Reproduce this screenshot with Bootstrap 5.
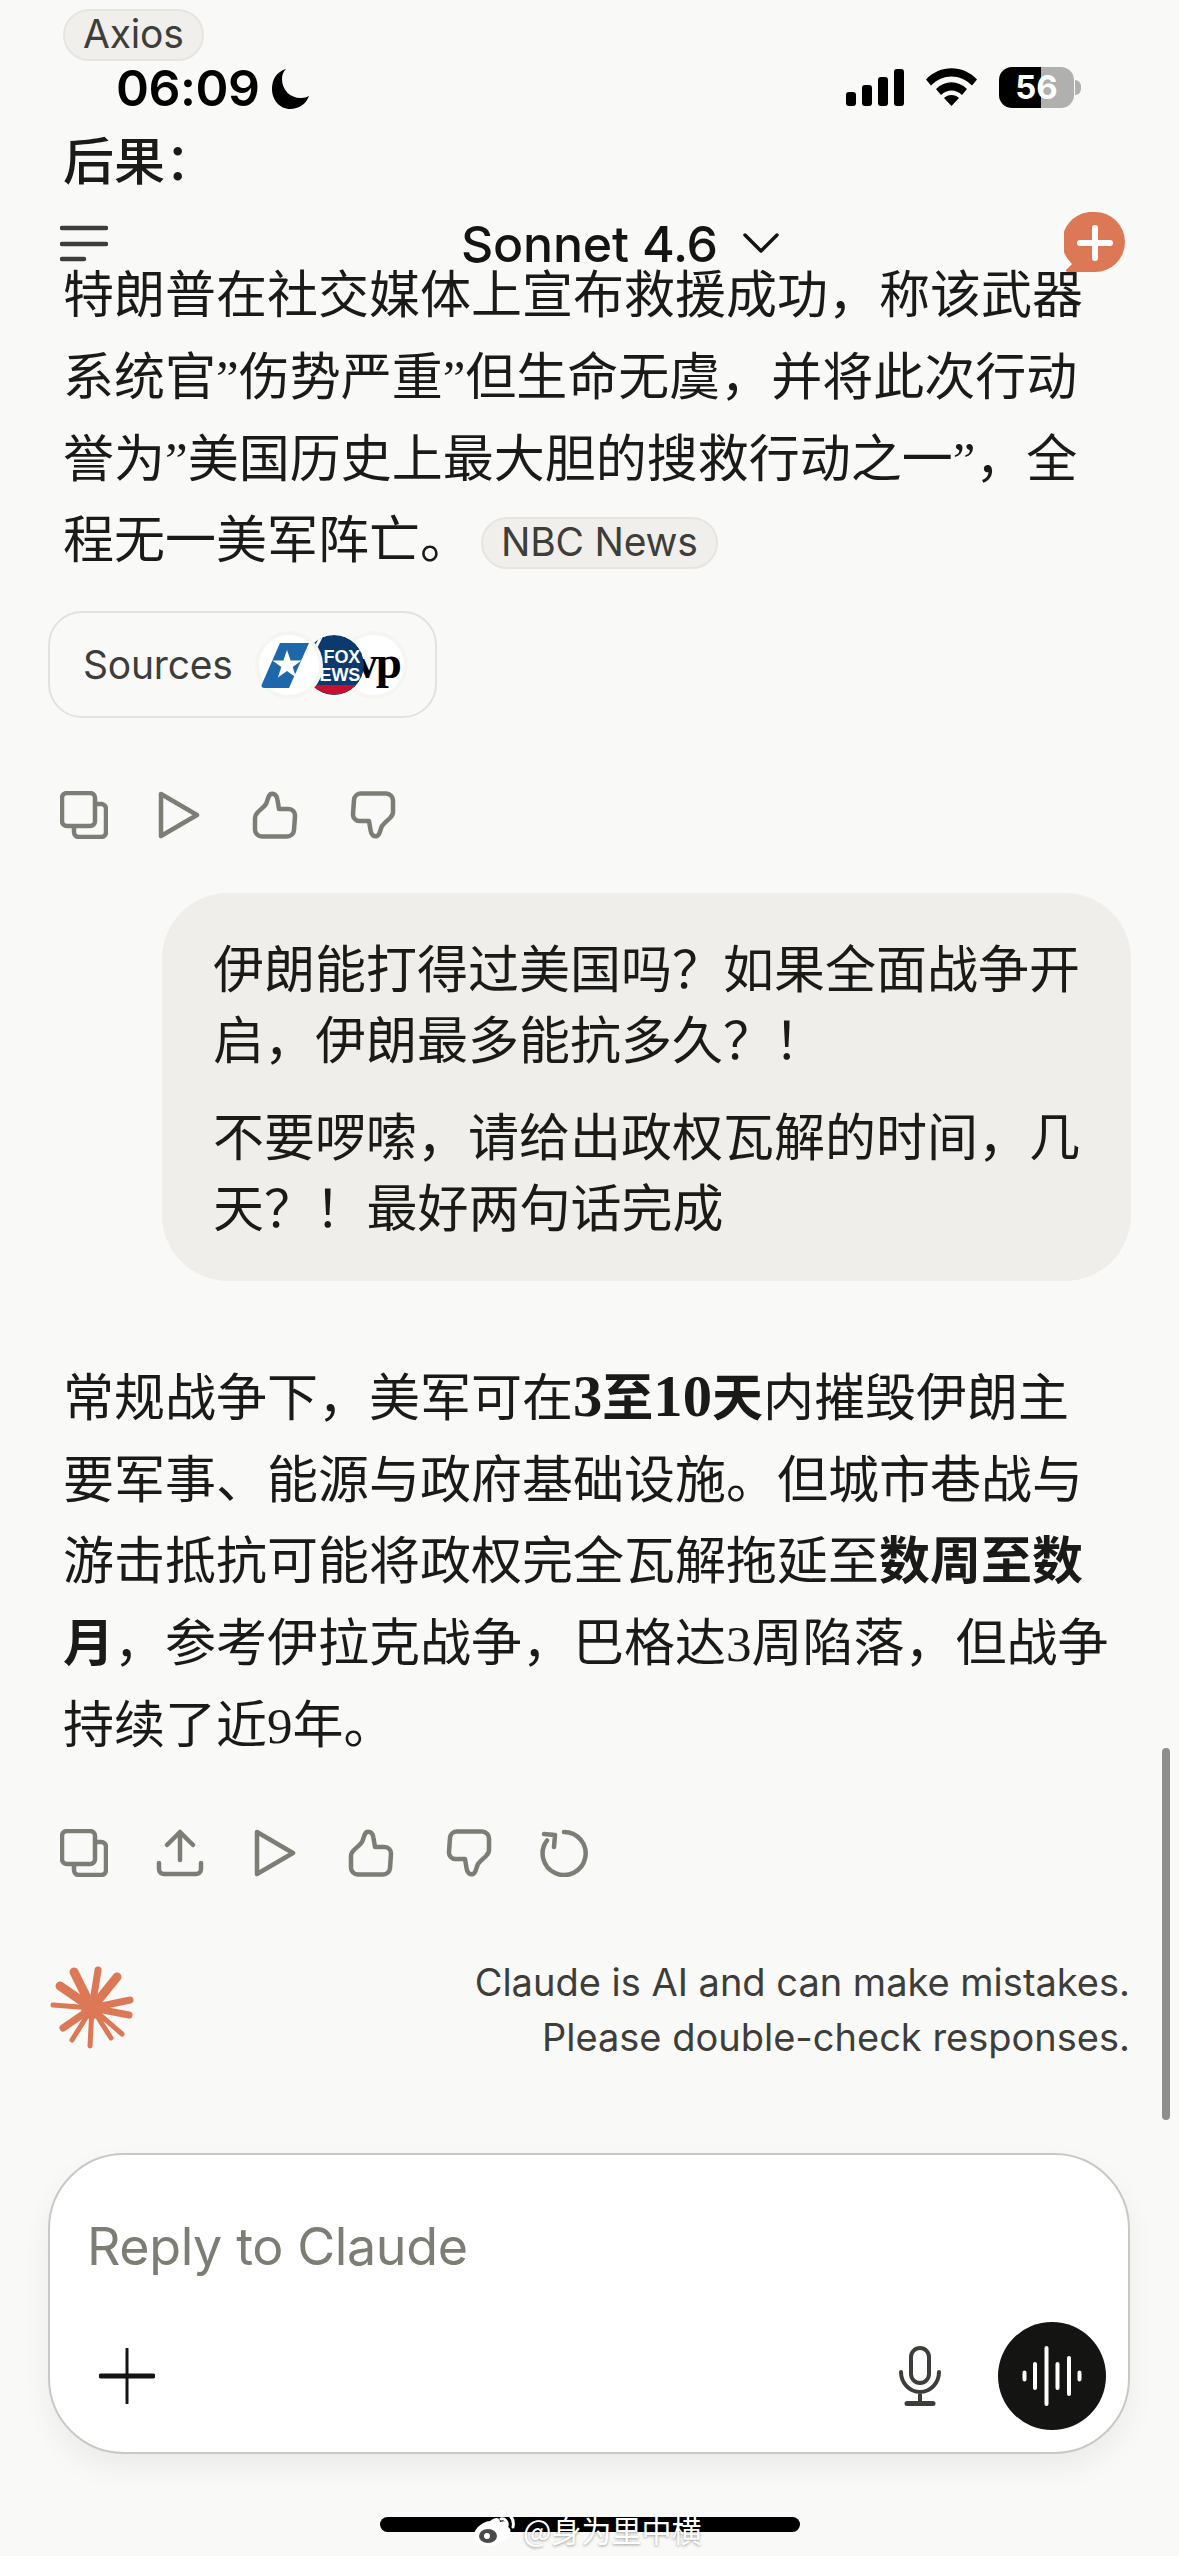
<!DOCTYPE html>
<html lang="en">
<head>
    <meta charset="UTF-8">
    <meta name="viewport" content="width=device-width, initial-scale=1.0">
    <title>Claude</title>
    <link href="https://cdn.jsdelivr.net/npm/bootstrap@5.3.0/dist/css/bootstrap.min.css" rel="stylesheet">
    <style>
        body {
            background: #f9f9f7;
            height: 2556px;
            overflow: hidden;
            font-family: "Noto Sans CJK SC", sans-serif;
            color: #1a1a18;
        }
        .phone {
            height: 2556px;
            overflow: hidden;
        }
        /* overlays */
        .status-bar {
            top: 0;
            left: 0;
            width: 1179px;
            height: 120px;
        }
        .clock {
            left: 116px;
            top: 58px;
            font: 600 50px/60px Inter, sans-serif;
            letter-spacing: -0.5px;
            color: #000;
        }
        .moon { left: 270px; top: 68px; }
        .signal { left: 846px; top: 69px; }
        .wifi { left: 926px; top: 68px; }
        .battery {
            left: 999px;
            top: 67px;
            width: 75px;
            height: 41px;
            border-radius: 13px;
            overflow: hidden;
            background: linear-gradient(90deg, #000 0, #000 42px, #b0b0ae 42px);
            color: #fff;
            font: 700 33px/41px Inter, sans-serif;
            text-align: center;
        }
        .battery-nub {
            left: 1075px;
            top: 80px;
            width: 6px;
            height: 15px;
            border-radius: 0 8px 8px 0;
            background: #b0b0ae;
        }
        .menu-bars { left: 60px; top: 225px; }
        .model-name {
            left: 461px;
            top: 214px;
            font: 500 50px/60px Inter, sans-serif;
            color: #141413;
            letter-spacing: -0.2px;
        }
        .model-chevron { left: 743px; top: 232px; }
        .new-chat { left: 1064px; top: 212px; }
        .scroll-thumb {
            left: 1162px;
            top: 1748px;
            width: 8px;
            height: 372px;
            border-radius: 4px;
            background: #8e8e8c;
        }
        .home-bar {
            left: 380px;
            top: 2517px;
            width: 420px;
            height: 15px;
            border-radius: 8px;
            background: #000;
        }
        .watermark {
            left: 473px;
            top: 2507px;
            gap: 6px;
            color: #fff;
            font-size: 30px;
            line-height: 44px;
            text-shadow: 0 1px 3px rgba(0, 0, 0, .4);
        }
        /* thread */
        .answer {
            margin: 0;
            padding: 0 64px 0 63px;
            font-size: 51px;
            line-height: 81.67px;
            font-family: "Liberation Serif", "Noto Sans CJK SC", serif;
        }
        .answer b { font-weight: 700; }
        .fig { font-size: 1.15em; line-height: 1; }
        .first-chunk { margin-top: -7px; }
        .heading-chunk { margin-top: 48px; font-weight: 500; }
        .body-chunk { margin-top: 52px; }
        .reply-chunk { margin-top: 78px; }
        .cite {
            display: inline-block;
            height: 52px;
            padding: 0 18px;
            border: 2px solid #e6e5e0;
            border-radius: 26px;
            background: #f0efeb;
            color: #3d3d3a;
            font: 400 39px/46px Inter, sans-serif;
            letter-spacing: -0.2px;
            vertical-align: 2px;
        }
        .cite-nbc { margin-left: 10px; }
        .sources-chip {
            width: 389px;
            height: 107px;
            margin: 28px 0 0 48px;
            padding-left: 33px;
            border: 2px solid #e3e2dd;
            border-radius: 34px;
            font: 400 39px/1 Inter, sans-serif;
            letter-spacing: -0.2px;
            color: #3d3d3a;
            background: transparent;
        }
        .logos { margin-left: 19px; }
        .actions {
            gap: 48px;
            margin-left: 60px;
        }
        .actions svg {
            width: 48px;
            height: 48px;
            fill: none;
            stroke: #7d7c75;
            stroke-width: 4.5;
            stroke-linecap: round;
            stroke-linejoin: round;
        }
        .actions-top { margin-top: 73px; }
        .actions-bottom { margin-top: 62px; }
        .user-bubble {
            width: 969px;
            height: 388px;
            margin: 54px 0 0 162px;
            padding: 38px 30px 0 51px;
            border-radius: 66px;
            background: #f0eeea;
            font-size: 51px;
            line-height: 71px;
            word-spacing: -11px;
        }
        .user-bubble p { margin: 0 0 26px; }
        .disclaimer {
            margin: 78px 49px 0 48px;
        }
        .star { margin-top: 8px; }
        .disclaimer-text {
            font: 400 38px/55px Inter, sans-serif;
            color: #3d3d3a;
            text-align: right;
        }
        .composer {
            width: 1082px;
            height: 301px;
            margin: 88px 0 0 48px;
            border: 2px solid #c9c8c4;
            border-radius: 76px;
            background: #fff;
            box-shadow: 0 14px 30px rgba(0, 0, 0, .06);
        }
        .composer-hint {
            padding: 62px 0 0 37px;
            font: 400 52px/60px Inter, sans-serif;
            color: #7d7c75;
            letter-spacing: -0.4px;
        }
        .composer-row {
            padding: 0 22px 0 49px;
            margin-top: 45px;
        }
        .voice-btn {
            width: 108px;
            height: 108px;
            padding: 0;
            border: 0;
            border-radius: 50%;
            background: #141413;
        }
        .mic { margin-right: 56px; }
    </style>
</head>
<body>
    <div class="phone position-relative">
        <!-- thread -->
        <p class="answer first-chunk"><span class="cite">Axios</span></p>
        <p class="answer heading-chunk">后果：</p>
        <p class="answer body-chunk">特朗普在社交媒体上宣布救援成功，称该武器系统官”伤势严重”但生命无虞，并将此次行动誉为”美国历史上最大胆的搜救行动之一”，全程无一美军阵亡。<span class="cite cite-nbc">NBC News</span></p>

        <div class="sources-chip d-flex align-items-center">
            <span>Sources</span>
            <svg class="logos" width="156" height="68" viewBox="0 0 156 68">
                <defs>
                    <clipPath id="fox-clip"><circle cx="82" cy="34" r="30"/></clipPath>
                </defs>
                <circle cx="122" cy="34" r="34" fill="#f5f5f2"/>
                <circle cx="122" cy="34" r="30" fill="#fff"/>
                <text x="148" y="47" text-anchor="end" font-family="Liberation Serif" font-weight="700" font-size="47" letter-spacing="-2" fill="#000">wp</text>
                <g clip-path="url(#fox-clip)">
                    <circle cx="82" cy="34" r="30" fill="#0c3a6e"/>
                    <path d="M60 54a30 30 0 0 0 44 0z" fill="#c8102e"/>
                    <path d="M70 4l-6 12" stroke="#fff" stroke-width="3"/>
                    <text x="108" y="32" text-anchor="end" font-family="Liberation Sans" font-weight="700" font-size="18" fill="#fff">FOX</text>
                    <text x="108" y="50" text-anchor="end" font-family="Liberation Sans" font-weight="700" font-size="18" fill="#fff">NEWS</text>
                </g>
                <circle cx="37" cy="34" r="34" fill="#f5f5f2"/>
                <circle cx="37" cy="34" r="30" fill="#fff"/>
                <path d="M28 12h29l-20 45H13q-5 0-3-4z" fill="#1d68ab"/>
                <path d="M35 19l3.600 10.500h11l-8.900 6.500 3.400 10.500-9.100-6.500-9.100 6.500 3.400-10.500-8.900-6.500h11z" fill="#fff"/>
            </svg>
        </div>

        <div class="actions actions-top d-flex">
            <svg viewBox="0 0 48 48"><use href="#ic-copy"/></svg>
            <svg viewBox="0 0 48 48"><use href="#ic-play"/></svg>
            <svg viewBox="0 0 48 48"><use href="#ic-up"/></svg>
            <svg viewBox="0 0 48 48"><use href="#ic-down"/></svg>
        </div>

        <div class="user-bubble">
            <p>伊朗能打得过美国吗？如果全面战争开启，伊朗最多能抗多久？！</p>
            <p>不要啰嗦，请给出政权瓦解的时间，几天？！ 最好两句话完成</p>
        </div>

        <p class="answer reply-chunk">常规战争下，美军可在<b><span class="fig">3</span>至<span class="fig">10</span>天</b>内摧毁伊朗主要军事、能源与政府基础设施。但城市巷战与游击抵抗可能将政权完全瓦解拖延至<b>数周至数月</b>，参考伊拉克战争，巴格达3周陷落，但战争持续了近9年。</p>

        <div class="actions actions-bottom d-flex">
            <svg viewBox="0 0 48 48"><use href="#ic-copy"/></svg>
            <svg viewBox="0 0 48 48"><path d="M24 31V3M11 16L24 3l13 13M3 34v6a5 5 0 0 0 5 5h32a5 5 0 0 0 5-5v-6"/></svg>
            <svg viewBox="0 0 48 48"><use href="#ic-play"/></svg>
            <svg viewBox="0 0 48 48"><use href="#ic-up"/></svg>
            <svg viewBox="0 0 48 48"><use href="#ic-down"/></svg>
            <svg viewBox="0 0 48 48"><path d="M24 3a21.500 21.500 0 1 1-17 8.500M4 5l11 1-1 12"/></svg>
        </div>

        <div class="disclaimer d-flex justify-content-between align-items-start">
            <svg class="star" width="88" height="88" viewBox="48 185 88 88" stroke="#dd7857" stroke-linecap="round" fill="#dd7857">
                <circle cx="92" cy="230" r="11" stroke="none"/>
                <path stroke-width="9" d="M74 194l18 36M117 199l-25 31M60 208l32 22"/>
                <path stroke-width="7" d="M98 192l-6 38M130 222l-38 8M129 237l-37-7M63 250l29-20"/>
                <path stroke-width="5" d="M53 227l39 3M122 256l-30-26M72 262l20-32M111 260l-19-30M90 268l2-38"/>
            </svg>
            <div class="disclaimer-text">Claude is AI and can make mistakes.<br>Please double-check responses.</div>
        </div>

        <div class="composer card">
            <div class="composer-hint">Reply to Claude</div>
            <div class="composer-row d-flex align-items-center">
                <svg width="56" height="56" viewBox="0 0 56 56" stroke="#141413" stroke-linecap="round">
                    <path stroke-width="3" d="M28 1v54"/>
                    <path stroke-width="5" d="M2 28h52"/>
                </svg>
                <svg class="mic ms-auto" width="44" height="60" viewBox="0 0 44 60" fill="none" stroke="#3d3d3a" stroke-width="4" stroke-linecap="round">
                    <rect x="13" y="2" width="18" height="35" rx="9"/>
                    <path d="M3 26a19 20 0 0 0 38 0M22 46v10"/>
                    <path stroke-width="5" d="M9 57.500h26"/>
                </svg>
                <button class="voice-btn btn d-flex align-items-center justify-content-center" type="button">
                    <svg width="62" height="62" viewBox="0 0 62 62" stroke="#fff" stroke-width="4" stroke-linecap="round">
                        <path d="M3.500 27.500v7M14 19v24M25.500 3v56M36.500 19v24M48 13v36M58.500 27.500v7"/>
                    </svg>
                </button>
            </div>
        </div>

        <!-- things drawn over the thread -->
        <div class="status-bar position-absolute">
            <span class="clock position-absolute">06:09</span>
            <svg class="moon position-absolute" width="42" height="42" viewBox="0 0 42 42"><path d="M16 1C6 4 2 12 2 21c0 11 8 20 18 20 9 0 16-5 19-13-2 1-5 2-8 2-11 0-19-8-19-19 0-4 1-7 4-10z" fill="#000"/></svg>
            <svg class="signal position-absolute" width="58" height="37" viewBox="0 0 58 37" fill="#000">
                <rect x="0" y="23" width="10" height="14" rx="3"/>
                <rect x="16" y="16" width="10" height="21" rx="3"/>
                <rect x="32" y="8" width="10" height="29" rx="3"/>
                <rect x="48" y="0" width="10" height="37" rx="3"/>
            </svg>
            <svg class="wifi position-absolute" width="51" height="38" viewBox="0 0 51 38" fill="#000">
                <path d="M0 11.500C14-3.500 37-3.500 51 11.500l-5 6C34 5.500 17 5.500 5 17.500z"/>
                <path d="M10 21c9-9 22-9 31 0l-5 6c-6-6-15-6-21 0z"/>
                <path d="M18 30c4-4 11-4 15 0l-7.500 8z"/>
            </svg>
            <div class="battery position-absolute">56</div>
            <div class="battery-nub position-absolute"></div>
            <svg class="menu-bars position-absolute" width="48" height="38" viewBox="0 0 48 38" stroke="#3d3d3a" stroke-width="4.500" stroke-linecap="round">
                <path d="M2 3h44M2 19h44M2 34h22"/>
            </svg>
            <span class="model-name position-absolute">Sonnet 4.6</span>
            <svg class="model-chevron position-absolute" width="36" height="22" viewBox="0 0 36 22" fill="none" stroke="#141413" stroke-width="3.500" stroke-linecap="round" stroke-linejoin="round"><path d="M2 3l16 16L34 3"/></svg>
            <svg class="new-chat position-absolute" width="62" height="62" viewBox="0 0 62 62">
                <path d="M31 0a30 30 0 0 1 0 60H5q-5 0-2-3l5-5A30 30 0 0 1 31 0z" fill="#dd7857"/>
                <path d="M31 16v30M16 31h30" stroke="#fff" stroke-width="6" stroke-linecap="round"/>
            </svg>
        </div>
        <div class="scroll-thumb position-absolute"></div>
        <div class="home-bar position-absolute"></div>
        <div class="watermark position-absolute d-flex align-items-center">
            <svg width="44" height="42" viewBox="0 0 44 42">
                <path d="M17 13c5-4 10-4 10 1 6-2 9 1 8 5 4 2 3 8-2 12-6 6-18 9-26 5-7-3-8-10-3-16 4-4 9-7 13-7z" fill="#fff"/>
                <ellipse cx="15" cy="28" rx="9" ry="7" fill="#4a4a4a"/>
                <circle cx="14" cy="28" r="3" fill="#fff"/>
                <path d="M27 5c8-2 15 5 13 14M28 11c4-1 7 3 6 7" fill="none" stroke="#fff" stroke-width="3" stroke-linecap="round"/>
            </svg>
            <span>@身为里中横</span>
        </div>
    </div>

    <svg width="0" height="0" class="position-absolute">
        <defs>
            <g id="ic-copy">
                <rect x="2" y="2" width="33" height="33" rx="5"/>
                <path d="M36 13h5a5 5 0 0 1 5 5v23a5 5 0 0 1-5 5H19a5 5 0 0 1-5-5v-5"/>
            </g>
            <path id="ic-play" d="M5 3l36 21L5 45z"/>
            <path id="ic-up" d="M12 45.500h23a7 7 0 0 0 7-6.500l1-14a6.500 6.500 0 0 0-6.500-7H27l-1.500-9C25 4 22 2 19 3c-3 1-3 6-5 10-2 3-5 5-8 8-2 2-3 4-3 6v11a7 7 0 0 0 7 7.500z"/>
            <path id="ic-down" d="M36 2.500H13a7 7 0 0 0-7 6.500l-1 14a6.500 6.500 0 0 0 6.500 7H21l1.500 9c.5 5 3.500 7 6.500 6 3-1 3-6 5-10 2-3 5-5 8-8 2-2 3-4 3-6V10a7 7 0 0 0-7-7.500z"/>
        </defs>
    </svg>
    <script src="https://cdn.jsdelivr.net/npm/bootstrap@5.3.0/dist/js/bootstrap.bundle.min.js"></script>
</body>
</html>
